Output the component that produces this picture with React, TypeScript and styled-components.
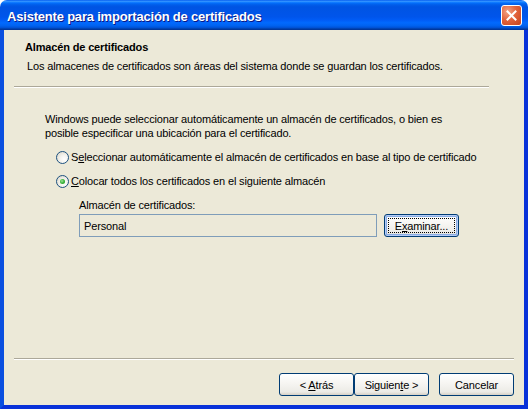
import React from "react";
import styled, { createGlobalStyle } from "styled-components";

const GlobalStyle = createGlobalStyle`
    html, body {
        margin: 0;
        padding: 0;
        background: #ffffff;
    }
    * {
        box-sizing: border-box;
    }
`

const Window = styled.div`
    width: 528px;
    height: 409px;
    display: flex;
    flex-direction: column;
    font-family: "Liberation Sans", Arial, sans-serif;
    font-size: 11px;
    letter-spacing: -0.15px;
    color: #000;
`

const TitleBar = styled.div`
    height: 30px;
    flex: none;
    display: flex;
    align-items: center;
    justify-content: space-between;
    padding: 0 6px 0 7px;
    border-radius: 7px 7px 0 0;
    background: linear-gradient(180deg, #0058ee 0%, #3593ff 4%, #288eff 6%, #127dff 8%, #036ffc 10%, #0262ee 14%, #0057e5 20%, #0054e3 24%, #0055eb 56%, #005bf5 66%, #026afe 76%, #0062ef 86%, #0052d6 92%, #0040ab 96%, #003092 100%);
`

const Title = styled.span`
    color: #fff;
    font-family: "Liberation Sans", Arial, sans-serif;
    font-weight: bold;
    font-size: 13px;
    letter-spacing: -0.2px;
    text-shadow: 1px 1px 0 #0a1883;
    margin-top: 2px;
`

const CloseButton = styled.div`
    width: 21px;
    height: 21px;
    border: 1px solid #fff;
    border-radius: 3px;
    display: flex;
    align-items: center;
    justify-content: center;
    background: radial-gradient(circle at 30% 30%, #f2a487 0%, #e2643d 45%, #c8421a 100%);
    margin-top: 1px;
`

const Body = styled.div`
    flex: 1;
    display: flex;
    flex-direction: column;
    background: #ece9d8;
    border-left: 4px solid #0a4fe0;
    border-right: 4px solid #0831d9;
    border-bottom: 4px solid #0831d9;
`

const Header = styled.div`
    padding: 10px 0 0 21px;
    height: 56px;
`

const HeaderTitle = styled.div`
    font-weight: bold;
    line-height: 14px;
`

const HeaderText = styled.div`
    line-height: 14px;
    margin-top: 5px;
    padding-left: 2px;
`

const Separator = styled.div<{ $right: number }>`
    height: 2px;
    border-top: 1px solid #aca899;
    border-bottom: 1px solid #ffffff;
    margin: 0 ${p => p.$right}px 0 10px;
`

const Main = styled.div`
    flex: 1;
    display: flex;
    flex-direction: column;
    padding: 24px 0 0 41px;
`

const Paragraph = styled.p`
    margin: 0;
    line-height: 14px;
    width: 420px;
`

const RadioRow = styled.label`
    display: flex;
    align-items: center;
    height: 16px;
    margin: 9px 0 0 11px;
    gap: 2px;
    &:nth-of-type(2) {
        margin-top: 8px;
    }
`

const RadioCircle = styled.span<{ $checked?: boolean }>`
    width: 13px;
    height: 13px;
    border-radius: 50%;
    border: 1px solid #1c5180;
    background: radial-gradient(circle at 65% 65%, #ffffff 0%, #f4f3ee 40%, #d6d2c2 100%);
    display: flex;
    align-items: center;
    justify-content: center;
    &::after {
        content: "";
        display: ${p => (p.$checked ? "block" : "none")};
        width: 5px;
        height: 5px;
        border-radius: 50%;
        background: radial-gradient(circle at 40% 40%, #a0e49a 0%, #3bb33b 50%, #1a8a1a 100%);
    }
`

const StoreBlock = styled.div`
    margin: 9px 0 0 34px;
    display: flex;
    flex-direction: column;
    gap: 2px;
`

const StoreLabel = styled.div`
    line-height: 14px;
`

const StoreRow = styled.div`
    display: flex;
    gap: 7px;
`

const StoreInput = styled.div`
    width: 298px;
    height: 23px;
    border: 1px solid #7f9db9;
    background: #ece9d8;
    padding: 0 4px;
    display: flex;
    align-items: center;
`

const Button = styled.button<{ $focused?: boolean }>`
    width: 75px;
    height: 23px;
    padding: 0;
    font-family: "Liberation Sans", Arial, sans-serif;
    font-size: 11px;
    letter-spacing: -0.15px;
    color: #000;
    border: 1px solid #003c74;
    border-radius: 3px;
    background: linear-gradient(180deg, #ffffff 0%, #f7f6f3 40%, #ecebe6 85%, #d6d0c5 100%);
    box-shadow: ${p => (p.$focused ? "inset 0 0 0 1px #b6cbf5, inset 0 0 0 2px #89ade4" : "none")};
    position: relative;
    cursor: default;
    &::after {
        content: "";
        display: ${p => (p.$focused ? "block" : "none")};
        position: absolute;
        inset: 3px;
        border: 1px dotted #000;
    }
`

const Footer = styled.div`
    display: flex;
    justify-content: flex-end;
    padding: 13px 10px 9px 0;
`

const ButtonGroup = styled.div`
    display: flex;
    gap: 0px;
    margin-right: 10px;
`

const Key = styled.u`
    text-decoration: underline;
`

const App: React.FC = () => {
    return (
        <Window>
            <GlobalStyle />
            <TitleBar>
                <Title>Asistente para importación de certificados</Title>
                <CloseButton>
                    <svg width="11" height="11" viewBox="0 0 11 11">
                        <path d="M1.5 1.5 L9.5 9.5 M9.5 1.5 L1.5 9.5" stroke="#fff" strokeWidth="2" strokeLinecap="square" />
                    </svg>
                </CloseButton>
            </TitleBar>
            <Body>
                <Header>
                    <HeaderTitle>Almacén de certificados</HeaderTitle>
                    <HeaderText>Los almacenes de certificados son áreas del sistema donde se guardan los certificados.</HeaderText>
                </Header>
                <Separator $right={35} />
                <Main>
                    <Paragraph>
                        Windows puede seleccionar automáticamente un almacén de certificados, o bien es posible especificar una ubicación para el certificado.
                    </Paragraph>
                    <RadioRow>
                        <RadioCircle />
                        <span>S<Key>e</Key>leccionar automáticamente el almacén de certificados en base al tipo de certificado</span>
                    </RadioRow>
                    <RadioRow>
                        <RadioCircle $checked />
                        <span><Key>C</Key>olocar todos los certificados en el siguiente almacén</span>
                    </RadioRow>
                    <StoreBlock>
                        <StoreLabel>Almacén de certificados:</StoreLabel>
                        <StoreRow>
                            <StoreInput>Personal</StoreInput>
                            <Button $focused>E<Key>x</Key>aminar...</Button>
                        </StoreRow>
                    </StoreBlock>
                </Main>
                <Separator $right={10} />
                <Footer>
                    <ButtonGroup>
                        <Button>&lt; <Key>A</Key>trás</Button>
                        <Button>Siguien<Key>t</Key>e &gt;</Button>
                    </ButtonGroup>
                    <Button>Cancelar</Button>
                </Footer>
            </Body>
        </Window>
    );
};

export default App;
